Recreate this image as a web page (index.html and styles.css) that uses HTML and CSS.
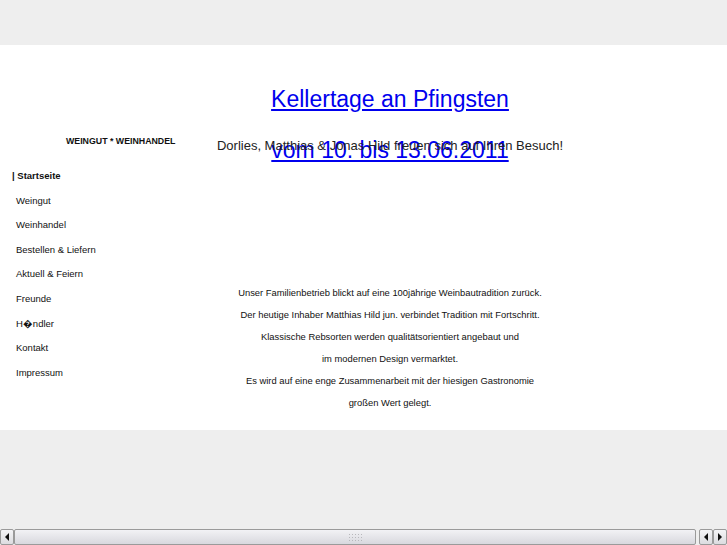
FILE: index.html
```html
<!DOCTYPE html>
<html lang="de">
<head>
<meta charset="utf-8">
<title>Weingut Hild</title>
<link rel="stylesheet" href="styles.css">
</head>
<body>
<div class="page">
  <div class="top"></div>
  <div class="band">
    <nav class="nav">
      <div class="brand">WEINGUT * WEINHANDEL</div>
      <ul class="menu">
        <li class="active">| Startseite</li>
        <li>Weingut</li>
        <li>Weinhandel</li>
        <li>Bestellen &amp; Liefern</li>
        <li>Aktuell &amp; Feiern</li>
        <li>Freunde</li>
        <li>H&#xFFFD;ndler</li>
        <li>Kontakt</li>
        <li>Impressum</li>
      </ul>
    </nav>
    <main class="main">
      <div class="stack">
        <h1 class="headline"><a href="#">Kellertage an Pfingsten<br>vom 10. bis 13.06.2011</a></h1>
        <p class="greeting">Dorlies, Matthias &amp; Jonas Hild freuen sich auf Ihren Besuch!</p>
      </div>
      <div class="intro">
        <p>Unser Familienbetrieb blickt auf eine 100jährige Weinbautradition zurück.</p>
        <p>Der heutige Inhaber Matthias Hild jun. verbindet Tradition mit Fortschritt.</p>
        <p>Klassische Rebsorten werden qualitätsorientiert angebaut und</p>
        <p>im modernen Design vermarktet.</p>
        <p>Es wird auf eine enge Zusammenarbeit mit der hiesigen Gastronomie</p>
        <p>großen Wert gelegt.</p>
      </div>
    </main>
  </div>
  <div class="bottom"></div>
  <div class="hscroll">
    <div class="sbtn"><span class="arr-l"></span></div>
    <div class="thumb"><span class="grip"></span></div>
    <div class="sbtn gapl"><span class="arr-l"></span></div>
    <div class="sbtn"><span class="arr-r"></span></div>
  </div>
</div>
</body>
</html>
```
FILE: styles.css
```css
html, body {
  margin: 0;
  padding: 0;
}
body {
  background: #eeeeee;
  font-family: "Liberation Sans", Arial, sans-serif;
  color: #111;
}
.page {
  height: 545px;
  display: flex;
  flex-direction: column;
  overflow: hidden;
}
.top {
  height: 45px;
  flex: none;
}
.band {
  height: 385px;
  flex: none;
  background: #fff;
  display: grid;
  grid-template-columns: 200px 380px;
}
.nav {
  padding-top: 90px;
}
.brand {
  font-size: 8.8px;
  font-weight: bold;
  line-height: 12px;
  padding-left: 66px;
  white-space: nowrap;
}
.menu {
  list-style: none;
  margin: 17px 0 0;
  padding: 0 0 0 16px;
  font-size: 9.5px;
  line-height: 24.6px;
}
.menu li {
  white-space: nowrap;
}
.menu .active {
  font-weight: bold;
  text-indent: -4px;
}
.main {
  padding-top: 29px;
  text-align: center;
}
.stack {
  display: grid;
}
.stack > * {
  grid-area: 1 / 1;
}
.headline {
  margin: 0;
  font-size: 23px;
  font-weight: normal;
  line-height: 51px;
  white-space: nowrap;
}
.headline a {
  color: #0000ee;
}
.greeting {
  margin: 64px 0 0;
  font-size: 13px;
  line-height: 16px;
  color: #222;
  white-space: nowrap;
}
.intro {
  margin-top: 106px;
  font-size: 9.4px;
  line-height: 22px;
}
.intro p {
  margin: 0;
  white-space: nowrap;
}
.bottom {
  flex: 1;
}
.hscroll {
  height: 16px;
  flex: none;
  display: flex;
  box-sizing: border-box;
}
.sbtn {
  width: 14px;
  flex: none;
  box-sizing: border-box;
  border: 1px solid #9a9a9a;
  border-radius: 2px;
  background: linear-gradient(#f4f4f6, #dcdce0);
  display: flex;
  align-items: center;
  justify-content: center;
}
.gapl {
  margin-left: 3px;
}
.thumb {
  flex: 1;
  box-sizing: border-box;
  border: 1px solid #9a9a9a;
  border-radius: 2px;
  background: linear-gradient(#f2f2f5, #d8d8de);
  display: flex;
  align-items: center;
  justify-content: center;
}
.grip {
  width: 14px;
  height: 8px;
  background-image: radial-gradient(circle, #b8b8bc 0.8px, transparent 1px);
  background-size: 3px 3px;
}
.arr-l, .arr-r {
  width: 0;
  height: 0;
  border-top: 4px solid transparent;
  border-bottom: 4px solid transparent;
}
.arr-l {
  border-right: 4px solid #111;
}
.arr-r {
  border-left: 4px solid #111;
}
```
